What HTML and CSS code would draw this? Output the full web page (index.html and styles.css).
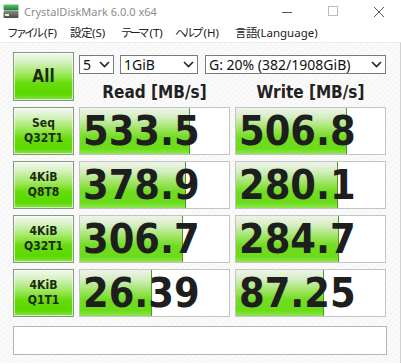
FILE: index.html
```html
<!DOCTYPE html>
<html>
<head lang="ja">
    <meta charset="UTF-8">
    <title>CrystalDiskMark 6.0.0 x64</title>
    <link rel="stylesheet" href="styles.css">
</head>
<body>
<!-- タイトルバー -->
<div class="titlebar">
    <svg class="appIcon" width="16" height="16" viewBox="0 0 16 16">
        <defs>
            <linearGradient id="gTop" x1="0" y1="0" x2="0" y2="1">
                <stop offset="0" stop-color="#5fc26a"/>
                <stop offset="1" stop-color="#1f7a34"/>
            </linearGradient>
            <linearGradient id="gBody" x1="0" y1="0" x2="0" y2="1">
                <stop offset="0" stop-color="#8a8a8a"/>
                <stop offset="1" stop-color="#4a4a4a"/>
            </linearGradient>
        </defs>
        <rect x="0.5" y="1.5" width="15" height="6" rx="1" fill="url(#gTop)"/>
        <rect x="0.5" y="8" width="15" height="7" rx="1" fill="url(#gBody)"/>
        <rect x="2" y="11" width="4" height="2" fill="#d8f5c8"/>
    </svg>
    <span class="title">CrystalDiskMark 6.0.0 x64</span>
    <div class="winCtrl">
        <svg width="46" height="22" viewBox="0 0 46 22"><line x1="18" y1="12.5" x2="28" y2="12.5" stroke="#555" stroke-width="1"/></svg>
        <svg width="46" height="22" viewBox="0 0 46 22"><rect x="18.5" y="6.5" width="9" height="9" fill="none" stroke="#bbb" stroke-width="1"/></svg>
        <svg width="46" height="22" viewBox="0 0 46 22"><path d="M18 7 L28 17 M28 7 L18 17" stroke="#555" stroke-width="1"/></svg>
    </div>
</div>
<!-- メニュー -->
<div class="menubar">
    <span class="m1"><b class="kana">ファイル</b>(F)</span>
    <span class="m2"><b class="kanji">設定</b>(S)</span>
    <span class="m3"><b class="kana">テーマ</b>(T)</span>
    <span class="m4"><b class="kana">ヘルプ</b>(H)</span>
    <span class="m5"><b class="kanji">言語</b>(Language)</span>
</div>
<!-- 本体 -->
<div class="main">
    <div class="grid">
        <div class="btn btnAll">All</div>
        <div class="topCtrl">
            <div class="selects">
                <div class="sel selCount">5<svg class="chev" width="11" height="7" viewBox="0 0 11 7"><polyline points="1,1 5.5,5.5 10,1" fill="none" stroke="#222" stroke-width="1.6"/></svg></div>
                <div class="sel selSize">1GiB<svg class="chev" width="11" height="7" viewBox="0 0 11 7"><polyline points="1,1 5.5,5.5 10,1" fill="none" stroke="#222" stroke-width="1.6"/></svg></div>
                <div class="sel selDrive">G: 20% (382/1908GiB)<svg class="chev" width="11" height="7" viewBox="0 0 11 7"><polyline points="1,1 5.5,5.5 10,1" fill="none" stroke="#222" stroke-width="1.6"/></svg></div>
            </div>
            <div class="heads">
                <div class="head">Read [MB/s]</div>
                <div class="head">Write [MB/s]</div>
            </div>
        </div>

        <div class="btn">Seq<br>Q32T1</div>
        <div class="val"><div class="bar" style="width:110px"></div><span>533.5</span></div>
        <div class="val"><div class="bar" style="width:111px"></div><span>506.8</span></div>

        <div class="btn">4KiB<br>Q8T8</div>
        <div class="val"><div class="bar" style="width:106px"></div><span>378.9</span></div>
        <div class="val"><div class="bar" style="width:102px"></div><span>280.1</span></div>

        <div class="btn">4KiB<br>Q32T1</div>
        <div class="val"><div class="bar" style="width:103px"></div><span>306.7</span></div>
        <div class="val"><div class="bar" style="width:103px"></div><span>284.7</span></div>

        <div class="btn">4KiB<br>Q1T1</div>
        <div class="val"><div class="bar" style="width:72px"></div><span>26.39</span></div>
        <div class="val"><div class="bar" style="width:88px"></div><span>87.25</span></div>
    </div>
    <!-- コメント -->
    <div class="comment"></div>
</div>
</body>
</html>
```

FILE: styles.css
```css
html,body{margin:0;padding:0;}
body{
    width:401px;height:364px;overflow:hidden;background:#fff;
    font-family:"DejaVu Sans Condensed","DejaVu Sans",sans-serif;
}
.titlebar{
    height:22px;display:flex;align-items:center;background:#fff;
}
.appIcon{margin:0 5px 0 3px;flex:none;}
.title{
    font-family:"Noto Sans","Open Sans",sans-serif;font-size:11px;color:#8c8c8c;
    flex:1;
}
.winCtrl{display:flex;height:22px;margin-right:-1px;}
.winCtrl svg{display:block;}
.menubar{
    height:20px;display:flex;align-items:center;background:#fff;
    font-family:"Noto Sans","Noto Sans CJK JP",sans-serif;font-size:11.5px;color:#222;
    padding-left:7px;
}
.menubar b{font-weight:normal;font-family:"Noto Sans CJK JP",sans-serif;}
.menubar .kana{letter-spacing:-3px;margin-right:3px;}
.menubar .kanji{letter-spacing:-0.5px;}
.m1{width:63px;}
.m2{width:51px;}
.m3{width:54px;}
.m4{width:60px;}
.main{
    border-top:1px solid #ececec;height:321px;
    padding:9px 0 0 13px;box-sizing:border-box;
    background:repeating-linear-gradient(-45deg,#f6f6f6 0,#f6f6f6 2px,#fbfbfb 2px,#fbfbfb 4px);
    border-right:1px solid #d0d0d0;
}
.grid{
    display:grid;grid-template-columns:61px 151px 151px;
    grid-template-rows:49px repeat(4,48px);
    column-gap:5px;row-gap:6px;
}
.btn{
    box-sizing:border-box;border:1px solid #8a9684;
    background:linear-gradient(to bottom,#f2f8ef 0%,#d8f2c4 18%,#9ee85c 45%,#66dc0c 65%,#5cd800 88%,#86e44a 100%);
    box-shadow:inset 0 0 0 1px rgba(255,255,255,.6);
    display:flex;align-items:center;justify-content:center;text-align:center;
    font-weight:bold;font-size:12px;line-height:15px;color:#1c2a12;
}
.btnAll{font-size:17px;}
.topCtrl{grid-column:2 / 4;}
.selects{display:flex;margin-top:3px;gap:6px;}
.sel{
    box-sizing:border-box;height:19px;border:1px solid #7a7a7a;background:#fff;
    font-family:"Noto Sans","Open Sans",sans-serif;font-size:14px;line-height:17px;
    padding-left:3px;color:#111;position:relative;
}
.selCount{width:35px;}
.selSize{width:78px;}
.selDrive{width:181px;margin-left:1px;}
.chev{position:absolute;right:3px;top:5px;}
.heads{display:grid;grid-template-columns:151px 151px;column-gap:5px;margin-top:8px;}
.head{
    text-align:center;font-weight:bold;font-size:17px;line-height:20px;color:#222;
}
.val{
    position:relative;box-sizing:border-box;border:1px solid #c4c4c4;background:#fff;
    display:flex;align-items:center;padding-left:3px;overflow:hidden;
}
.bar{
    position:absolute;left:0;top:0;bottom:0;box-sizing:border-box;
    border-right:1px solid #4d9a22;
    background:linear-gradient(to bottom,#eef3ea 0%,#d4eec2 20%,#9ee462 45%,#70dc20 65%,#6cdc18 88%,#8ee652 100%);
}
.val span{
    position:relative;font-weight:bold;font-size:41px;line-height:46px;color:#1e1e1e;
}
.comment{
    box-sizing:border-box;width:374px;height:29px;margin-top:9px;
    border:1px solid #b4b4b4;background:#fff;
}
```
